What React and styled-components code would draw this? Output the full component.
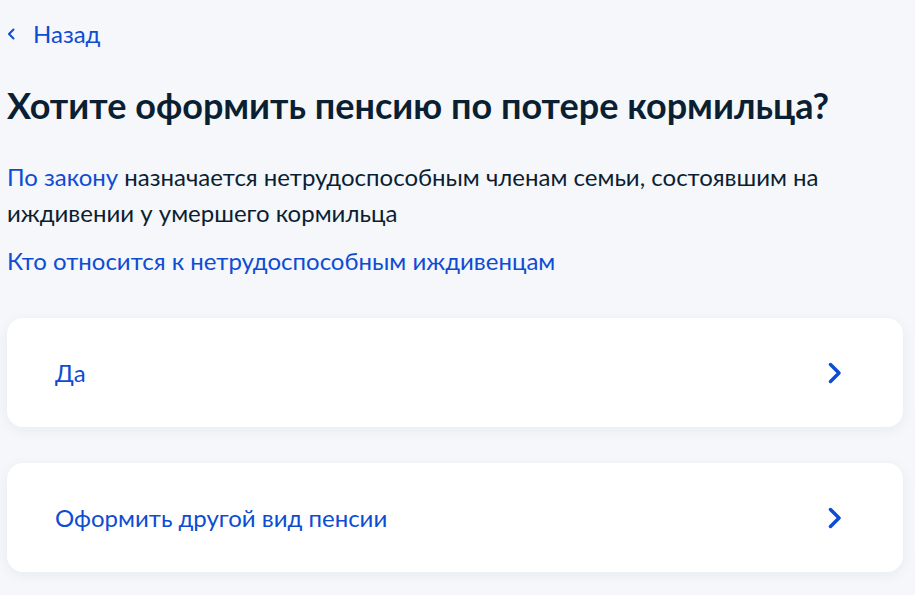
import React from "react"
import styled, { createGlobalStyle } from "styled-components"

const GlobalStyle = createGlobalStyle`
  * {
    margin: 0;
    padding: 0;
    box-sizing: border-box;
  }
  body {
    background: #f5f7fb;
    font-family: Lato, "Open Sans", sans-serif;
    color: #0b1f33;
  }
`

const Page = styled.div`
  width: 915px;
  height: 595px;
  padding: 22px 12px 0 7px;
  overflow: hidden;
`

const Back = styled.a`
  display: flex;
  align-items: center;
  gap: 18px;
  height: 24px;
  color: #0d4cd3;
  font-size: 24px;
  line-height: 24px;
  text-decoration: none;
  cursor: pointer;
`

const Title = styled.h1`
  margin-top: 37px;
  font-size: 36px;
  line-height: 44px;
  font-weight: 700;
  color: #0b1f33;
`

const Text = styled.p`
  margin-top: 32px;
  font-size: 24px;
  line-height: 36px;
  color: #0b1f33;
`

const Link = styled.a`
  color: #0d4cd3;
  text-decoration: none;
  cursor: pointer;
`

const LinkLine = styled.p`
  margin-top: 12px;
  font-size: 24px;
  line-height: 36px;
  color: #0d4cd3;
`

const Options = styled.div`
  margin-top: 39px;
  display: flex;
  flex-direction: column;
  gap: 36px;
`

const Card = styled.button`
  display: flex;
  align-items: center;
  justify-content: space-between;
  width: 896px;
  height: 109px;
  padding: 0 60px 0 48px;
  background: #fff;
  border: none;
  border-radius: 16px;
  box-shadow: 0 3px 14px rgba(11, 31, 51, 0.06);
  font-family: Lato, "Open Sans", sans-serif;
  font-size: 24px;
  color: #0d4cd3;
  cursor: pointer;
  text-align: left;
`

const Chevron = () => (
  <svg width="16" height="24" viewBox="0 0 16 24" fill="none">
    <path d="M3.5 3.5 L12 12 L3.5 20.5" stroke="#0d4cd3" strokeWidth="3.5" strokeLinecap="round" strokeLinejoin="round" />
  </svg>
)

const BackArrow = () => (
  <svg width="8" height="12" viewBox="0 0 8 12" fill="none">
    <path d="M6.5 1.5 L2 6 L6.5 10.5" stroke="#0d4cd3" strokeWidth="2" strokeLinecap="round" strokeLinejoin="round" />
  </svg>
)

export default function App() {
  const options = ["Да", "Оформить другой вид пенсии"]
  return (
    <Page>
      <GlobalStyle />
      <Back>
        <BackArrow />
        Назад
      </Back>
      <Title>Хотите оформить пенсию по потере кормильца?</Title>
      <Text>
        <Link>По закону</Link> назначается нетрудоспособным членам семьи, состоявшим на
        иждивении у умершего кормильца
      </Text>
      <LinkLine>Кто относится к нетрудоспособным иждивенцам</LinkLine>
      <Options>
        {options.map((o) => (
          <Card key={o}>
            {o}
            <Chevron />
          </Card>
        ))}
      </Options>
    </Page>
  )
}
